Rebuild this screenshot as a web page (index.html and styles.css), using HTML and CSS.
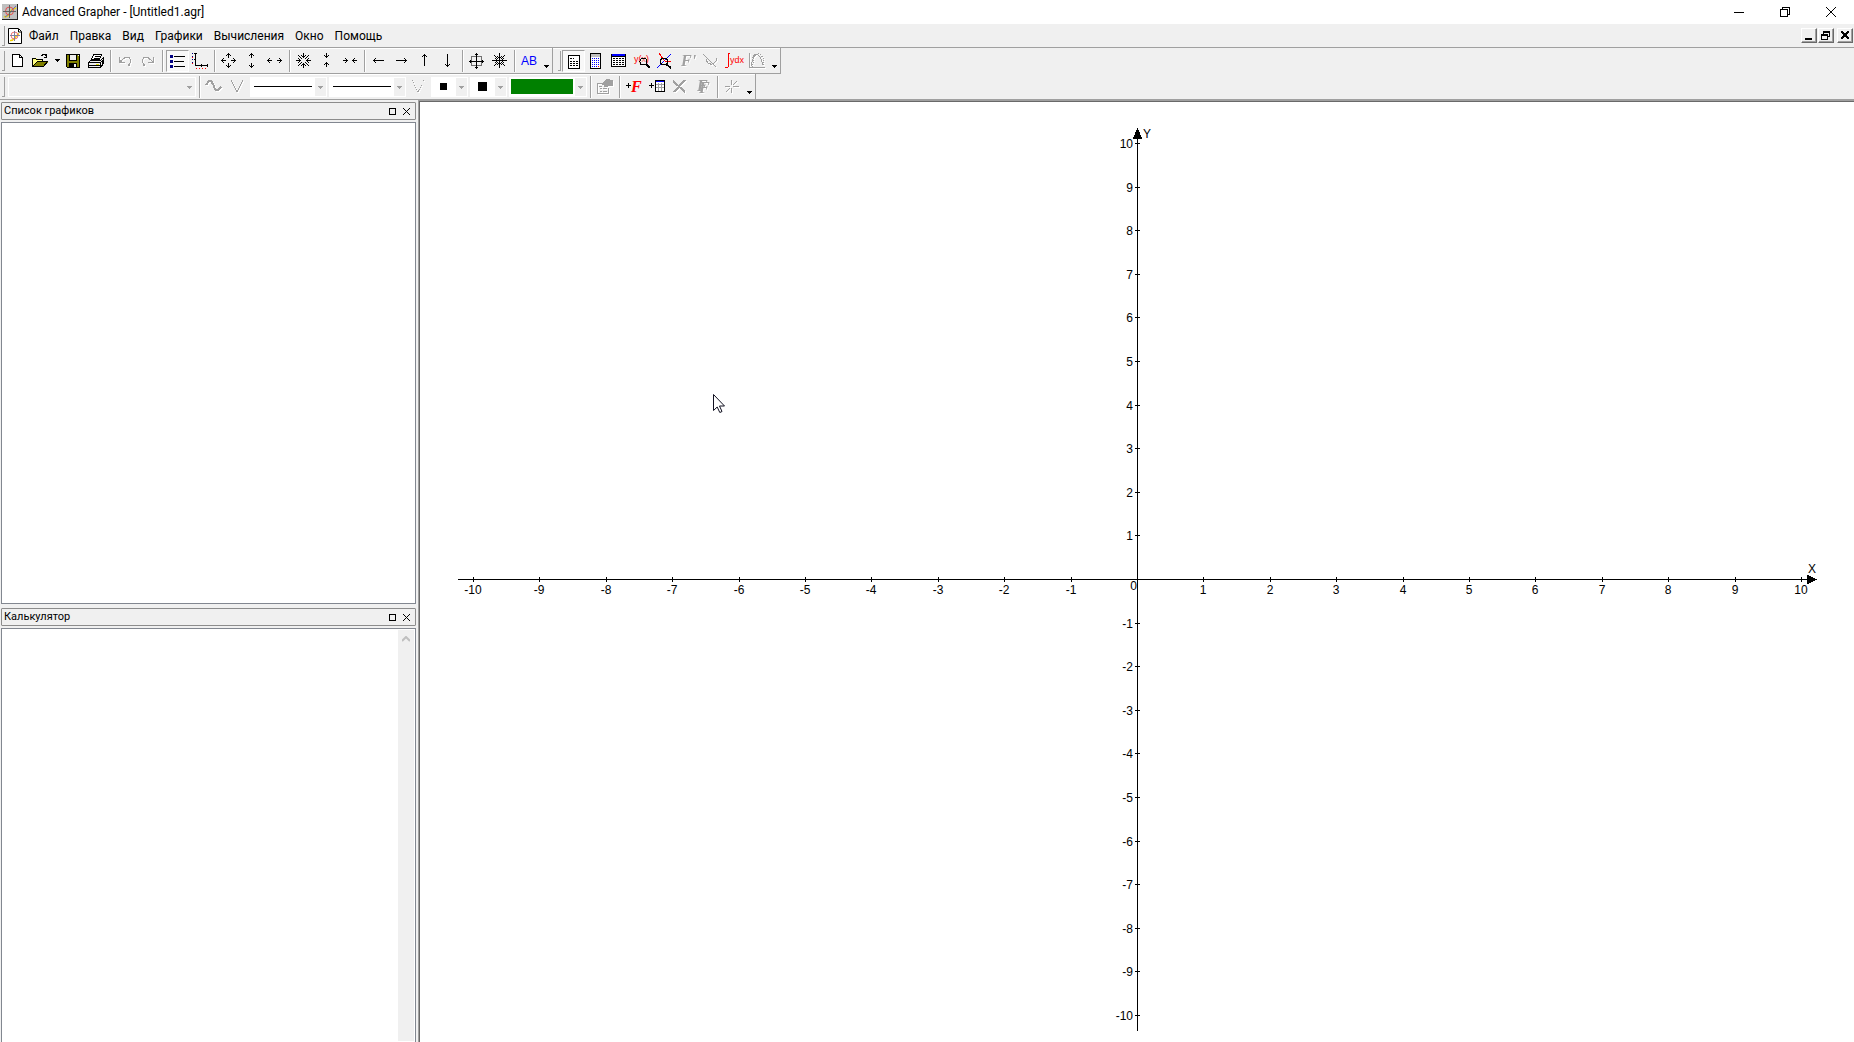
FILE: index.html
```html
<!DOCTYPE html>
<html lang="ru">
<head>
<meta charset="utf-8">
<title>Advanced Grapher - [Untitled1.agr]</title>
<link rel="stylesheet" href="styles.css">
</head>
<body>
<svg class="defs" aria-hidden="true">
  <defs>
    <path id="up" d="M2 0h1v5H2zM1 1h3v1H1zM0 2h1v1H0zM4 2h1v1H4z"/>
    <path id="down" d="M2 0h1v5H2zM1 3h3v1H1zM0 2h1v1H0zM4 2h1v1H4z"/>
    <path id="left" d="M0 2h5v1H0zM1 1h1v3H1zM2 0h1v1H2zM2 4h1v1H2z"/>
    <path id="right" d="M0 2h5v1H0zM3 1h1v3H3zM2 0h1v1H2zM2 4h1v1H2z"/>
  </defs>
</svg>
<header class="titlebar">
  <svg class="app-icon" viewBox="0 0 16 16"><path fill="#c0c0c0" d="M0 0h16v16H0z"/><path d="M0 15.500h16M15.500 0v16" stroke="#202020"/><path d="M2 12.500c4 1 5-2 6.500-5S11 5 14 4" fill="none" stroke="#f0d800" stroke-width="1.500"/><path d="M3 13l4-3 4-5 3-3" fill="none" stroke="#6868c0"/><circle cx="7.500" cy="7" r="4" fill="none" stroke="#e85050"/><path d="M1 7.500h13M7.500 1v13" stroke="#606060"/></svg>
  <h1 class="title">Advanced Grapher - [Untitled1.agr]</h1>
  <div class="window-buttons">
    <button class="win-btn" aria-label="Свернуть"><svg viewBox="0 0 10 10"><path d="M0 5.500h10"/></svg></button>
    <button class="win-btn" aria-label="Восстановить"><svg viewBox="0 0 10 10"><path d="M.5 2.500h7v7h-7zM2.500 2V.5h7v7H8"/></svg></button>
    <button class="win-btn smooth" aria-label="Закрыть"><svg viewBox="0 0 10 10"><path d="M0 0l10 10M10 0L0 10"/></svg></button>
  </div>
</header>

<nav class="menubar">
  <span class="grip"></span>
  <svg class="doc-icon" viewBox="0 0 14 16"><path fill="#fff" stroke="#000" d="M.5.5h10l3 3v12H.5z"/><path d="M10.500 1v3h3" fill="none" stroke="#000"/><path d="M2 12.500c4 1 4-3 9-7" fill="none" stroke="#f0d000" stroke-width="1.500"/><circle cx="6.500" cy="7.500" r="3.500" fill="none" stroke="#f07070"/><path d="M2 7.500h10M6.500 3v10" stroke="#8080a0"/></svg>
  <button class="menu-item">Файл</button>
  <button class="menu-item">Правка</button>
  <button class="menu-item">Вид</button>
  <button class="menu-item">Графики</button>
  <button class="menu-item">Вычисления</button>
  <button class="menu-item">Окно</button>
  <button class="menu-item">Помощь</button>
  <div class="mdi-buttons">
    <button class="mdi-btn" aria-label="Свернуть документ"><svg viewBox="0 0 12 11"><path d="M2 8h7v2H2z"/></svg></button>
    <button class="mdi-btn" aria-label="Восстановить документ"><svg viewBox="0 0 12 11"><path d="M3 1h7v6H8V6h1V3H4v1H3zM1 4h7v6H1zM2 6v3h5V6z" fill-rule="evenodd"/></svg></button>
    <button class="mdi-btn mdi-close" aria-label="Закрыть документ"><svg viewBox="0 0 12 11"><path d="M2 1h2v1h1v1h2V2h1V1h2v2H9v1H8v2h1v1h1v2H8V8H7V7H5v1H4v1H2V7h1V6h1V4H3V3H2z"/></svg></button>
  </div>
</nav>

<div class="toolbars">
  <div class="toolbar-row">
    <div class="band">
      <span class="grip"></span>
      <button class="tool" aria-label="Создать"><svg viewBox="0 0 16 16"><path fill="#fff" stroke="#000" d="M3.500 1.500h7l3 3v9h-10z"/><path fill="none" stroke="#000" d="M10.500 2v2.500h3"/></svg></button>
      <button class="tool" aria-label="Открыть"><svg viewBox="0 0 16 16"><path fill="#ffff80" d="M1 5h3l1 1h6v3H5l-4 4z"/><path fill="#808000" d="M5 9h11l-4 5H1z"/><path fill="none" stroke="#000" d="M.5 14V5.500h3l1 1h6v2M.5 13.500h11l4-5h-10l-5 5M9 2.500h1v-1h3v1h1v1M14.500 1v3h-3"/></svg></button>
      <button class="tool-arrow" aria-label="Недавние файлы"><svg viewBox="0 0 5 3"><path d="M0 0h5v1H4v1H3v1H2V2H1V1H0z"/></svg></button>
      <button class="tool" aria-label="Сохранить"><svg viewBox="0 0 16 16"><path fill="#808000" stroke="#000" d="M1.500 1.500h13v13h-12l-1-1z"/><path fill="#efefef" stroke="#000" d="M4.500 1.500h7v6h-7z"/><path d="M4 10h8v4H4z"/><path fill="#efefef" d="M9 11h2v3H9zM13 2h1v1h-1z"/></svg></button>
      <button class="tool" aria-label="Печать"><svg viewBox="0 0 16 16"><path fill="#fff" stroke="#000" d="M5.500 1.500h8l-2 5h-8z"/><path stroke="#000" d="M6.500 3.500h5M5.500 5.500h5"/><path fill="#efefef" stroke="#000" d="M2.500 7.500h10l3-3v6l-3 4h-12v-5z"/><path fill="none" stroke="#000" d="M1 9.500h11.500l3-3M12.500 9.500v5M1 12.500h11M14.500 7v5"/><path fill="#e0e000" d="M8 11h3v1H8z"/></svg></button>
      <span class="sep"></span>
      <button class="tool off" aria-label="Отменить" disabled><svg viewBox="0 0 16 16"><path d="M2.500 4v5.500H8M3 9l5-4.500h4l1.500 2V9L12 11.500" fill="none"/><path class="f" d="M2 6l4 4H2zM11 11h2v2h-2z"/></svg></button>
      <button class="tool off" aria-label="Вернуть" disabled><svg viewBox="0 0 16 16"><path d="M13.500 4v5.500H8M13 9L8 4.500H4L2.500 6.500V9L4 11.500" fill="none"/><path class="f" d="M14 6l-4 4h4zM3 11h2v2H3z"/></svg></button>
      <span class="sep"></span>
      <button class="tool pressed" aria-label="Список графиков" aria-pressed="true"><svg viewBox="0 0 16 16"><path fill="#000080" d="M1 2h3v3H1zM1 7h3v3H1zM1 12h3v3H1z"/><path stroke="#000" d="M5 3.500h11M5 8.500h10M5 13.500h11"/></svg></button>
      <button class="tool" aria-label="Свойства осей"><svg viewBox="0 0 16 16"><path fill="none" stroke="#000" d="M2 .5h3M3.500 1v11.500h12M2 6.500h2M15.500 11v3M9.500 11v3"/><path stroke="#000080" stroke-dasharray="1 2" d="M.5 0v12"/><path stroke="#f00" stroke-dasharray="1 2" d="M4 15.500h12M0 4.500h1M0 10.500h1"/></svg></button>
      <span class="sep"></span>
      <button class="tool" aria-label="Увеличить"><svg viewBox="0 0 16 16"><use href="#up" x="5"/><use href="#down" x="5" y="10"/><use href="#left" y="5"/><use href="#right" x="10" y="5"/></svg></button>
      <button class="tool" aria-label="Увеличить по Y"><svg viewBox="0 0 16 16"><use href="#up" x="5"/><use href="#down" x="5" y="10"/></svg></button>
      <button class="tool" aria-label="Увеличить по X"><svg viewBox="0 0 16 16"><use href="#left" y="5"/><use href="#right" x="10" y="5"/></svg></button>
      <span class="sep"></span>
      <button class="tool" aria-label="Уменьшить"><svg viewBox="0 0 16 16"><use href="#down" x="5"/><use href="#up" x="5" y="10"/><use href="#right" y="5"/><use href="#left" x="10" y="5"/><path d="M2 2h1v1H2zM3 3h1v1H3zM4 4h1v1H4zM5 5h1v1H5zM12 2h1v1h-1zM11 3h1v1h-1zM10 4h1v1h-1zM9 5h1v1H9zM2 12h1v1H2zM3 11h1v1H3zM4 10h1v1H4zM5 9h1v1H5zM12 12h1v1h-1zM11 11h1v1h-1zM10 10h1v1h-1zM9 9h1v1H9z"/></svg></button>
      <button class="tool" aria-label="Уменьшить по Y"><svg viewBox="0 0 16 16"><use href="#down" x="5"/><use href="#up" x="5" y="9"/></svg></button>
      <button class="tool" aria-label="Уменьшить по X"><svg viewBox="0 0 16 16"><use href="#right" x="1" y="5"/><use href="#left" x="10" y="5"/></svg></button>
      <span class="sep"></span>
      <button class="tool" aria-label="Влево"><svg viewBox="0 0 16 16"><use href="#left" x="2" y="5"/><path d="M6 7h7v1H6z"/></svg></button>
      <button class="tool" aria-label="Вправо"><svg viewBox="0 0 16 16"><use href="#right" x="8" y="5"/><path d="M2 7h7v1H2z"/></svg></button>
      <button class="tool" aria-label="Вверх"><svg viewBox="0 0 16 16"><use href="#up" x="5" y="1"/><path d="M7 5h1v8H7z"/></svg></button>
      <button class="tool" aria-label="Вниз"><svg viewBox="0 0 16 16"><use href="#down" x="5" y="9"/><path d="M7 1h1v8H7z"/></svg></button>
      <span class="sep"></span>
      <button class="tool" aria-label="Равный масштаб"><svg viewBox="0 0 16 16"><path fill="none" stroke="#707070" d="M2.500 3.500h10v9h-10z"/><path d="M0 8h15v1H0zM7 0h1v16H7zM6 1h3v1H6zM6 14h3v1H6zM1 7h1v3H1zM13 7h1v3h-1z"/></svg></button>
      <button class="tool" aria-label="Стандартный масштаб"><svg viewBox="0 0 16 16"><use href="#down" x="5" y="1"/><use href="#up" x="5" y="9"/><use href="#right" x="1" y="5"/><use href="#left" x="9" y="5"/><path d="M7 0h1v15H7zM0 7h15v1H0zM2 2h1v1H2zM3 3h1v1H3zM4 4h1v1H4zM5 5h1v1H5zM12 2h1v1h-1zM11 3h1v1h-1zM10 4h1v1h-1zM9 5h1v1H9zM2 12h1v1H2zM3 11h1v1H3zM4 10h1v1H4zM5 9h1v1H5zM12 12h1v1h-1zM11 11h1v1h-1zM10 10h1v1h-1zM9 9h1v1H9z"/></svg></button>
      <span class="sep"></span>
      <button class="tool text-tool">AB</button>
      <button class="more" aria-label="Ещё"><svg viewBox="0 0 5 3"><path d="M0 0h5v1H4v1H3v1H2V2H1V1H0z"/></svg></button>
    </div>
    <div class="band">
      <span class="grip"></span>
      <button class="tool pressed" aria-label="Калькулятор" aria-pressed="true"><svg viewBox="0 0 16 16"><path fill="#fff" stroke="#000" d="M3.500 2.500h11v13h-11z"/><path stroke="#000" stroke-dasharray="2 1" d="M5 5.500h4M5 8.500h2M8 8.500h5M5 10.500h2M8 10.500h5M5 12.500h2M8 12.500h5"/></svg></button>
      <button class="tool" aria-label="Цифровой калькулятор"><svg viewBox="0 0 16 16"><path fill="#fff" stroke="#000" d="M2.500.5h10v15h-10z"/><path fill="#c0c0c0" d="M3 1h9v3H3z"/><path stroke="#0000ff" stroke-dasharray="1 1" d="M4 5.500h7M4 7.500h7M4 9.500h7M4 11.500h7M4 13.500h5"/><path fill="#f00" d="M10 13h1v1h-1z"/></svg></button>
      <button class="tool" aria-label="Таблица"><svg viewBox="0 0 16 16"><path fill="#fff" stroke="#000" d="M.5 1.500h14v12H.5z"/><path fill="#00f" d="M1 1h13v2H1z"/><path d="M1 3h13v1H1z"/><path stroke="#000" stroke-dasharray="2 1" d="M2 5.500h11M2 7.500h11M2 9.500h11M2 11.500h11"/></svg></button>
      <button class="tool" aria-label="Значение функции"><svg viewBox="0 0 16 16"><text class="mini" x="0" y="9">y(x)</text><circle cx="9.500" cy="8.500" r="3.500" fill="#efefef" fill-opacity=".4" stroke="#000"/><path stroke="#000" stroke-width="2" d="M12 11l4 4"/></svg></button>
      <button class="tool" aria-label="Пересечение"><svg viewBox="0 0 16 16"><path stroke="#00f" d="M0 15L14 1"/><path fill="none" stroke="#f00" d="M2 0l4 6 3 3 5-1"/><circle cx="7" cy="8.500" r="3.500" fill="none" stroke="#000"/><path stroke="#000" stroke-width="2" d="M9 11l5 4"/></svg></button>
      <button class="tool off" aria-label="Производная" disabled><svg viewBox="0 0 16 16"><text class="f-sign" x="1" y="13">F'</text></svg></button>
      <button class="tool off" aria-label="Касательная" disabled><svg viewBox="0 0 16 16"><path fill="none" d="M0 1l13 13M3 6c2 7 9 7 11-1"/></svg></button>
      <button class="tool" aria-label="Интеграл"><svg viewBox="0 0 16 16"><path fill="none" stroke="#f00" d="M4 .5H2.500v13l-1 1H-1"/><text class="mini" x="4" y="10">ydx</text></svg></button>
      <button class="tool off" aria-label="Регрессия" disabled><svg viewBox="0 0 16 16"><path fill="none" d="M.5 0v14.500H16M2 13c3-15 8-15 12-1"/><path fill="none" stroke-dasharray="1 1" d="M3 5c3-5 8-6 11 0v8M5 7l-2 7"/></svg></button>
      <button class="more" aria-label="Ещё"><svg viewBox="0 0 5 3"><path d="M0 0h5v1H4v1H3v1H2V2H1V1H0z"/></svg></button>
    </div>
  </div>

  <div class="toolbar-row">
    <div class="band">
      <span class="grip"></span>
      <div class="combo combo-name"><select aria-label="График" disabled><option></option></select></div>
      <span class="sep"></span>
      <button class="tool off" aria-label="Кривая" disabled><svg viewBox="0 0 16 16"><path fill="none" stroke-width="2" d="M0 6l3-4h2l2 3 2 5 1 1h2l3-3"/></svg></button>
      <button class="tool off" aria-label="Ломаная" disabled><svg viewBox="0 0 16 16"><path fill="none" d="M2 1l6 12 6-12"/></svg></button>
      <div class="combo combo-line"><i class="line"></i><select aria-label="Стиль линии" disabled><option></option></select></div>
      <div class="combo combo-line"><i class="line"></i><select aria-label="Толщина линии" disabled><option></option></select></div>
      <button class="tool off" aria-label="Точки" disabled><svg viewBox="0 0 16 16"><path fill="none" stroke-dasharray="1 1" d="M2 1l6 12 6-12"/></svg></button>
      <div class="combo combo-point"><i class="dot"></i><select aria-label="Стиль точки" disabled><option></option></select></div>
      <div class="combo combo-point"><i class="dot dot-large"></i><select aria-label="Размер точки" disabled><option></option></select></div>
      <div class="combo combo-color"><i class="swatch"></i><select aria-label="Цвет" disabled><option></option></select></div>
      <span class="sep"></span>
      <button class="tool off" aria-label="Свойства графика" disabled><svg viewBox="0 0 16 16"><path fill="none" d="M7 4.500H.5v10h11V9M2 7.500h3M3 9.500h2M3 12.500h2M6 9.500h4M6 12.500h4"/><path class="f" d="M5 4l4-4h4v1h3v6h-4l-2 1H7V6H5z"/></svg></button>
      <span class="sep"></span>
      <button class="tool" aria-label="Добавить график"><svg viewBox="0 0 16 16"><path stroke="#000" d="M0 6.500h5M2.500 4v5"/><text class="f-sign red" x="5" y="13">F</text></svg></button>
      <button class="tool" aria-label="Добавить таблицу"><svg viewBox="0 0 16 16"><path stroke="#000" d="M0 6.500h5M2.500 4v5"/><path fill="#fff" d="M6 2h9v10H6z"/><path stroke="#a0a0a0" d="M7 5.500h8M7 8.500h8M9.500 4v8M12.500 4v8"/><path fill="none" stroke="#000" d="M6.500 1.500h9v11h-9z"/><path fill="#00f" d="M7 2h8v1H7z"/></svg></button>
      <button class="tool off" aria-label="Удалить" disabled><svg viewBox="0 0 16 16"><path stroke-width="2" d="M1 2l12 11M13 1L2 13"/></svg></button>
      <button class="tool off" aria-label="Дублировать" disabled><svg viewBox="0 0 16 16"><text class="f-sign" x="2" y="12">F</text><text class="f-sign" x="4" y="14">F</text></svg></button>
      <span class="sep"></span>
      <button class="tool off" aria-label="Трассировка" disabled><svg viewBox="0 0 16 16"><path fill="none" d="M7.500 1v5M7.500 9v5M1 7.500h5M9 7.500h6M9 6l4-4M6 9l-4 4"/></svg></button>
      <button class="more" aria-label="Ещё"><svg viewBox="0 0 5 3"><path d="M0 0h5v1H4v1H3v1H2V2H1V1H0z"/></svg></button>
    </div>
  </div>
</div>

<main class="workspace">
  <aside class="sidebar">
    <section class="panel panel-list">
      <header class="panel-head">
        <h2>Список графиков</h2>
        <button class="panel-btn" aria-label="Развернуть"><svg viewBox="0 0 7 7"><path d="M.5.5h6v6h-6z"/></svg></button>
        <button class="panel-btn" aria-label="Закрыть"><svg viewBox="0 0 7 7"><path d="M0 0l7 7M7 0L0 7"/></svg></button>
      </header>
      <div class="panel-body"></div>
    </section>
    <section class="panel panel-calc">
      <header class="panel-head">
        <h2>Калькулятор</h2>
        <button class="panel-btn" aria-label="Развернуть"><svg viewBox="0 0 7 7"><path d="M.5.5h6v6h-6z"/></svg></button>
        <button class="panel-btn" aria-label="Закрыть"><svg viewBox="0 0 7 7"><path d="M0 0l7 7M7 0L0 7"/></svg></button>
      </header>
      <div class="panel-body calc-body">
        <textarea class="calc-input" aria-label="Калькулятор"></textarea>
        <div class="scrollbar"><svg viewBox="0 0 8 6"><path d="M0 5l4-4 4 4" fill="none" stroke="#bfbfbf" stroke-width="2"/></svg></div>
      </div>
    </section>
  </aside>
  <section class="canvas">
    <svg class="graph" id="graph" role="img" aria-label="Координатная плоскость"></svg>
    <svg class="pointer" viewBox="0 0 12 19"><path fill="#fff" stroke="#101020" d="M.5.500v16l3.700-3.500 2.600 5.500 2.200-1-2.500-5.500h5z"/></svg>
  </section>
</main>
<script src="graph.js"></script>
</body>
</html>
```
FILE: styles.css
```css
* { box-sizing: border-box; }

html, body { height: 100%; margin: 0; }

body {
  display: flex;
  flex-direction: column;
  overflow: hidden;
  background: #f0f0f0;
  color: #000;
  font-family: Roboto, "Noto Sans", sans-serif;
  font-size: 12px;
}

button, select, textarea {
  margin: 0;
  padding: 0;
  border: 0;
  border-radius: 0;
  background: none;
  color: inherit;
  font: inherit;
}

svg { display: block; shape-rendering: crispEdges; }
.defs { position: absolute; width: 0; height: 0; }

/* Title bar */
.titlebar {
  display: flex;
  align-items: center;
  flex: none;
  height: 24px;
  padding-left: 2px;
  background: #fff;
}
.app-icon, .doc-icon { shape-rendering: auto; }
.app-icon { width: 16px; height: 16px; }
.title { margin: 0 0 0 4px; font-size: 12px; font-weight: 400; line-height: 24px; }
.window-buttons { display: flex; margin-left: auto; }
.win-btn {
  display: grid;
  place-items: center;
  width: 46px;
  height: 20px;
}
.win-btn svg { width: 10px; height: 10px; fill: none; stroke: #000; }
.win-btn.smooth svg { overflow: visible; shape-rendering: auto; }

/* Menu */
.menubar {
  display: flex;
  align-items: center;
  flex: none;
  height: 24px;
  border-bottom: 1px solid #a0a0a0;
}
.grip {
  flex: none;
  width: 3px;
  height: 20px;
  margin: 0 1px 0 2px;
  border: 1px solid #a0a0a0;
  border-width: 0 1px 1px 0;
}
.doc-icon { width: 14px; height: 16px; margin: 0 1px 0 2px; }
.menu-item { padding: 0 5px 0 6px; line-height: 22px; }
.mdi-buttons { display: flex; gap: 1px; margin-left: auto; }
.mdi-btn {
  display: grid;
  place-items: center;
  width: 16px;
  height: 15px;
  border: 1px solid;
  border-color: #fff #696969 #696969 #fff;
  box-shadow: inset -1px -1px #a0a0a0;
}
.mdi-btn svg { width: 12px; height: 11px; }
.mdi-close { margin: 0 1px 0 2px; }

/* Toolbars */
.toolbars { flex: none; }
.toolbar-row {
  display: flex;
  height: 26px;
}
.toolbar-row:last-child { border-bottom: 1px solid #a0a0a0; }
.band {
  display: flex;
  align-items: center;
  border: 1px solid #a0a0a0;
  border-width: 0 1px 1px 0;
  box-shadow: inset 0 1px #fff;
}
.toolbar-row:last-child .band { border-bottom: 0; }
.band + .band { padding-left: 3px; }
.tool {
  display: grid;
  align-items: center;
  justify-items: start;
  width: 23px;
  height: 22px;
  padding-left: 3px;
}
.tool svg { width: 16px; height: 16px; overflow: visible; }
.pressed {
  padding-left: 2px;
  border: 1px solid;
  border-color: #a0a0a0 #fff #fff #a0a0a0;
  background: #f8f8f8;
}
.off svg { stroke: #a0a0a0; filter: drop-shadow(1px 1px #fff); }
.off .f { fill: #a0a0a0; stroke: none; }
.off .f-sign { fill: #a0a0a0; }
.f-sign {
  stroke: none;
  font: italic bold 16px "Liberation Serif", serif;
}
.red { fill: #f00; }
.mini {
  fill: #f00;
  stroke: none;
  font: 9px "Liberation Sans", sans-serif;
}
.text-tool { color: #00f; font-family: "Liberation Sans", sans-serif; }
.tool-arrow { display: grid; place-items: center; width: 10px; height: 22px; }
.tool-arrow svg, .more svg { width: 5px; height: 3px; }
.more {
  display: grid;
  place-items: end center;
  width: 11px;
  height: 22px;
  padding-bottom: 4px;
}
.sep {
  flex: none;
  width: 6px;
  height: 22px;
  border-left: 2px solid transparent;
  background: linear-gradient(90deg, #a0a0a0 1px, #fff 1px 2px, transparent 2px) no-repeat;
}

.combo {
  display: grid;
  align-items: center;
  height: 20px;
  margin: 0 1px;
  border: 1px solid #fff;
  background: #fff;
}
.combo > * { grid-area: 1 / 1; }
.combo select {
  width: 100%;
  height: 18px;
  appearance: none;
  opacity: 1;
  background:
    linear-gradient(#a0a0a0, #a0a0a0) right 5px top 8px / 1px 3px no-repeat,
    linear-gradient(#a0a0a0, #a0a0a0) right 4px top 8px / 3px 2px no-repeat,
    linear-gradient(#a0a0a0, #a0a0a0) right 3px top 8px / 5px 1px no-repeat,
    linear-gradient(#f0f0f0, #f0f0f0) right / 11px 18px no-repeat;
}
.combo-name { width: 188px; margin: 0 1px 0 2px; background: #f0f0f0; }
.combo-line { width: 77px; }
.combo-point { width: 37px; }
.combo-color { width: 78px; }
.line { height: 1px; margin: 0 14px 0 3px; background: #000; }
.dot { width: 7px; height: 7px; margin-left: 8px; background: #000; }
.dot-large { width: 9px; height: 9px; margin-left: 7px; }
.swatch { height: 15px; margin: 0 13px 0 1px; background: #008000; }

/* Workspace */
.workspace {
  display: flex;
  flex: 1;
  min-height: 0;
}
.sidebar {
  display: flex;
  flex-direction: column;
  flex: none;
  gap: 4px;
  width: 418px;
  padding: 2px 2px 0 1px;
}
.panel {
  display: flex;
  flex-direction: column;
  gap: 2px;
  min-height: 0;
}
.panel-list { flex: 502 1 0; }
.panel-calc { flex: 434 1 0; }
.panel-head {
  display: flex;
  align-items: center;
  flex: none;
  height: 18px;
  padding: 0 2px;
  border: 1px solid #8c8c8c;
  border-radius: 1px;
}
.panel-head h2 {
  flex: 1;
  margin: 0;
  font-size: 11px;
  font-weight: 400;
  line-height: 16px;
}
.panel-btn { display: grid; place-items: center; width: 14px; height: 14px; }
.panel-btn svg { width: 7px; height: 7px; fill: none; stroke: #000; }
.panel-body {
  flex: 1;
  min-height: 0;
  border: 1px solid #828790;
  background: #fff;
}
.calc-body { display: flex; padding: 1px; border-bottom: 0; }
.calc-input { flex: 1; resize: none; outline: 0; }
.scrollbar { width: 16px; padding: 6px 4px; background: #f0f0f0; }
.scrollbar svg { width: 8px; height: 6px; shape-rendering: auto; }

.canvas {
  position: relative;
  flex: 1;
  min-width: 0;
  padding: 1px 0 0 1px;
  border: solid #a0a0a0;
  border-width: 1px 0 0 1px;
  background: #fff;
  box-shadow: inset 1px 1px #696969;
}
.graph {
  width: 100%;
  height: 100%;
  stroke: #000;
}
.graph text {
  fill: #000;
  stroke: none;
  font-family: "Liberation Sans", Arial, sans-serif;
  font-size: 12px;
}
.graph .x-label { text-anchor: middle; }
.graph .y-label { text-anchor: end; }
.graph .arrow { stroke: none; }
.pointer {
  position: absolute;
  left: 294px;
  top: 293px;
  width: 12px;
  height: 19px;
  shape-rendering: auto;
}
```
FILE: graph.js
```js
(function () {
  var svg = document.getElementById('graph');
  var margin = { x: 53, top: 41, bottom: 27 };
  var range = 10;

  function draw() {
    var w = svg.clientWidth, h = svg.clientHeight;
    var cx = Math.round(w / 2);
    var cy = Math.round((h + margin.top - margin.bottom) / 2);
    var ux = (w - 2 * margin.x) / (2 * range);
    var uy = (h - margin.top - margin.bottom) / (2 * range);
    var left = cx - range * ux - 15, right = cx + range * ux + 16;
    var top = cy - range * uy - 15, bottom = cy + range * uy + 16;
    var path = 'M' + left + ' ' + (cy + 0.5) + 'H' + right +
      'M' + (cx + 0.5) + ' ' + top + 'V' + bottom;
    var labels = '';

    for (var i = -range; i <= range; i++) {
      if (i === 0) continue;
      var x = Math.round(cx + i * ux), y = Math.round(cy - i * uy);
      path += 'M' + (x + 0.5) + ' ' + (cy - 2) + 'v5';
      path += 'M' + (cx - 2) + ' ' + (y + 0.5) + 'h5';
      labels += '<text class="x-label" x="' + x + '" y="' + (cy + 15) + '">' + i + '</text>';
      labels += '<text class="y-label" x="' + (cx - 4) + '" y="' + (y + 5) + '">' + i + '</text>';
    }
    labels += '<text class="y-label" x="' + cx + '" y="' + (cy + 11) + '">0</text>';
    labels += '<text x="' + (cx + 6) + '" y="' + (top + 10) + '">Y</text>';
    labels += '<text class="x-label" x="' + (right - 5) + '" y="' + (cy - 6) + '">X</text>';

    svg.innerHTML = '<path fill="none" d="' + path + '"/>' +
      '<path class="arrow" d="M' + (cx + 0.5) + ' ' + top + 'l5 11h-10z"/>' +
      '<path class="arrow" d="M' + right + ' ' + (cy + 0.5) + 'l-10 -5v10z"/>' + labels;
  }

  draw();
  window.addEventListener('resize', draw);
})();
```
